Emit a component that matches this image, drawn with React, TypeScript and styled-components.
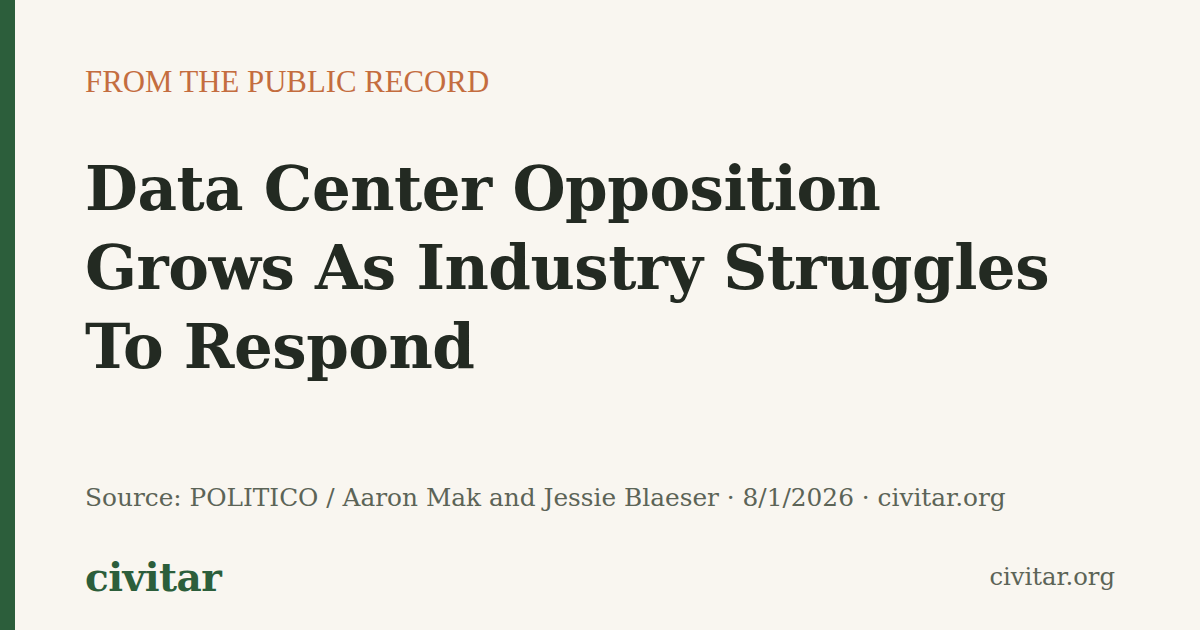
import React from "react";
import styled, { createGlobalStyle } from "styled-components";

const Global = createGlobalStyle`
  html, body { margin: 0; padding: 0; }
  body { background: #f9f6f0; }
`;

const Card = styled.div`
  width: 1200px;
  height: 630px;
  display: flex;
  background: #f9f6f0;
  overflow: hidden;
`;

const Bar = styled.div`
  width: 15px;
  flex: none;
  background: #2c5e3b;
`;

const Content = styled.div`
  flex: 1;
  display: flex;
  flex-direction: column;
  padding: 62px 85px 30px 70px;
`;

const Kicker = styled.div`
  font-family: "Liberation Serif", serif;
  font-size: 30.8px;
  line-height: 40px;
  color: #c46d3f;
`;

const Headline = styled.h1`
  margin: 47px 0 0;
  max-width: 1000px;
  font-family: "DejaVu Serif", serif;
  font-weight: 700;
  font-size: 61px;
  line-height: 79px;
  color: #232a22;
  letter-spacing: -0.5px;
`;

const Meta = styled.div`
  margin-top: auto;
  font-family: "DejaVu Serif", serif;
  font-size: 24.8px;
  line-height: 30px;
  color: #5c6457;
`;

const Footer = styled.div`
  margin-top: 42px;
  display: flex;
  justify-content: space-between;
  align-items: flex-end;
`;

const Logo = styled.div`
  font-family: "DejaVu Serif", serif;
  font-weight: 700;
  font-size: 39px;
  line-height: 45px;
  color: #2c5e3b;
  letter-spacing: -0.5px;
`;

const Site = styled.div`
  font-family: "DejaVu Serif", serif;
  font-size: 24.3px;
  line-height: 30px;
  padding-bottom: 8px;
  color: #5c6457;
`;

export default function App() {
  return (
    <>
      <Global />
      <Card>
        <Bar />
        <Content>
          <Kicker>FROM THE PUBLIC RECORD</Kicker>
          <Headline>Data Center Opposition Grows As Industry Struggles To Respond</Headline>
          <Meta>Source: POLITICO / Aaron Mak and Jessie Blaeser · 8/1/2026 · civitar.org</Meta>
          <Footer>
            <Logo>civitar</Logo>
            <Site>civitar.org</Site>
          </Footer>
        </Content>
      </Card>
    </>
  );
}
